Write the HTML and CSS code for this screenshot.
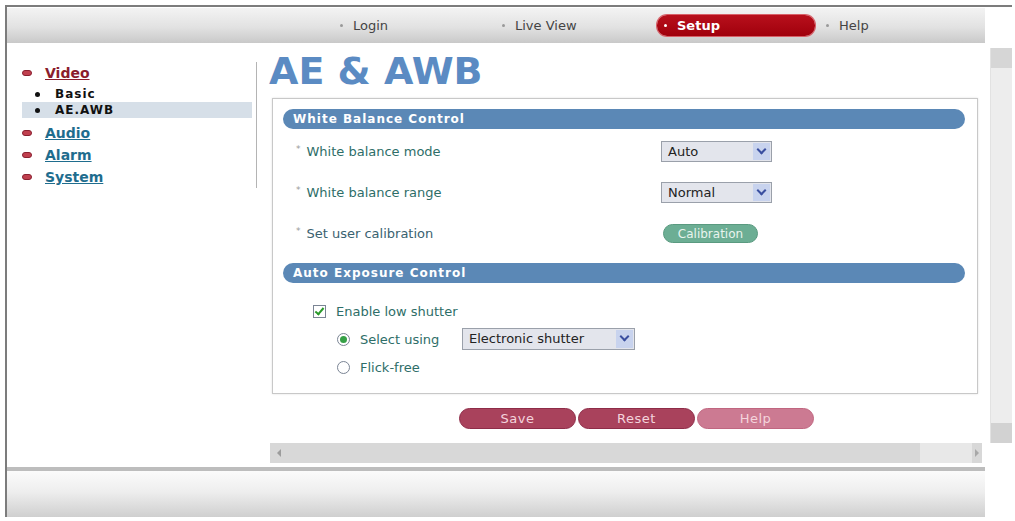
FILE: index.html
```html
<!DOCTYPE html>
<html lang="en">
<head>
    <meta charset="UTF-8">
    <title>AE &amp; AWB Setup</title>
    <link rel="stylesheet" href="styles.css">
</head>
<body>

    <div class="frame">
        <div class="topbar">
            <nav class="nav">
                <a class="nav-item">Login</a>
                <a class="nav-item">Live View</a>
                <a class="nav-item selected">Setup</a>
                <a class="nav-item">Help</a>
            </nav>
        </div>

        <div class="middle">
            <aside class="sidebar">
                <ul class="menu">
                    <li class="menu-item open"><a>Video</a>
                        <ul class="submenu">
                            <li>Basic</li>
                            <li class="current">AE.AWB</li>
                        </ul>
                    </li>
                    <li class="menu-item"><a>Audio</a></li>
                    <li class="menu-item"><a>Alarm</a></li>
                    <li class="menu-item"><a>System</a></li>
                </ul>
            </aside>

            <div class="content">
                <div class="page">
                    <h1 class="title">AE &amp; AWB</h1>

                    <div class="panel">
                        <div class="section-title">White Balance Control</div>
                        <div class="rows">
                            <div class="row">
                                <span class="label">White balance mode</span>
                                <div class="select short">Auto<span class="arrow"></span></div>
                            </div>
                            <div class="row">
                                <span class="label">White balance range</span>
                                <div class="select short">Normal<span class="arrow"></span></div>
                            </div>
                            <div class="row">
                                <span class="label cal">Set user calibration</span>
                                <button class="calibration">Calibration</button>
                            </div>
                        </div>

                        <div class="section-title">Auto Exposure Control</div>
                        <div class="exposure">
                            <div class="opt">
                                <span class="checkbox checked"></span>
                                <span>Enable low shutter</span>
                            </div>
                            <div class="opt sub">
                                <span class="radio checked"></span>
                                <span class="opt-label">Select using</span>
                                <div class="select long">Electronic shutter<span class="arrow"></span></div>
                            </div>
                            <div class="opt sub">
                                <span class="radio"></span>
                                <span>Flick-free</span>
                            </div>
                        </div>
                    </div>

                    <div class="buttons">
                        <button class="btn">Save</button>
                        <button class="btn">Reset</button>
                        <button class="btn light">Help</button>
                    </div>
                </div>

                <div class="vscroll">
                    <div class="vthumb"></div>
                    <div class="vtrack"></div>
                    <div class="vend"></div>
                </div>

                <div class="hscroll">
                    <span class="harrow left"></span>
                    <span class="htrack"></span>
                    <span class="hthumb"></span>
                    <span class="harrow right"></span>
                </div>
            </div>
        </div>

        <div class="separator"></div>
        <div class="footer"></div>
    </div>

</body>
</html>
```

FILE: styles.css
```css
body {
    margin: 0;
    background: #fff;
    font-family: "DejaVu Sans", Verdana, sans-serif;
    color: #333;
}
.frame {
    margin: 5px 0 0 5px;
    width: 1005px;
    border-top: 2px solid #7c7c7c;
    border-left: 2px solid #7c7c7c;
}

/* top navigation */
.topbar {
    margin-top: 1px;
    width: 978px;
    height: 35px;
    background: linear-gradient(#f3f3f3, #e2e2e2 55%, #c9c9c9);
}
.nav {
    display: flex;
    gap: 4px;
    padding: 7px 0 0 326px;
}
.nav-item {
    display: flex;
    align-items: center;
    width: 158px;
    height: 21px;
    box-sizing: border-box;
    padding-left: 7px;
    font-size: 13px;
    color: #444;
}
.nav-item::before {
    content: "";
    width: 3px;
    height: 3px;
    border-radius: 50%;
    background: #999;
    margin-right: 10px;
}
.nav-item.selected {
    background: linear-gradient(#b8101c, #a0000c);
    border-radius: 10px;
    color: #fff;
    font-weight: bold;
    box-shadow: 0 0 0 1px #d86068;
}
.nav-item.selected::before {
    background: #fff;
}

/* sidebar + content */
.middle {
    display: flex;
    height: 420px;
}
.sidebar {
    width: 261px;
}
.menu {
    list-style: none;
    width: 230px;
    margin: 19px 0 0;
    padding: 0 4px 0 15px;
    border-right: 1px solid #b4b4b4;
}
.menu-item > a {
    display: flex;
    align-items: center;
    height: 22px;
    font-size: 14px;
    font-weight: bold;
    color: #1f6d8e;
    text-decoration: underline;
}
.menu-item > a::before {
    content: "";
    width: 10px;
    height: 6px;
    border-radius: 3px;
    background: #c0404e;
    border: 1px solid #8a2030;
    box-sizing: border-box;
    margin-right: 13px;
}
.menu-item.open > a {
    color: #8a1c2c;
}
.submenu {
    list-style: none;
    margin: 2px 0 4px;
    padding: 0;
}
.submenu li {
    display: flex;
    align-items: center;
    height: 16px;
    padding-left: 13px;
    font-size: 12px;
    font-weight: bold;
    letter-spacing: 1px;
    color: #111;
}
.submenu li::before {
    content: "";
    width: 5px;
    height: 5px;
    border-radius: 50%;
    background: #111;
    margin-right: 15px;
}
.submenu li.current {
    background: #d6dfe8;
}

.content {
    display: grid;
    grid-template-columns: 714px 22px;
    grid-template-rows: 400px 20px;
    column-gap: 8px;
}
.page {
    padding: 8px 0 0 1px;
}
.title {
    margin: 0;
    font-size: 38px;
    line-height: 40px;
    color: #5b8bc3;
}
.panel {
    margin: 7px 0 0 3px;
    width: 706px;
    box-sizing: border-box;
    border: 1px solid #c8c8c8;
    box-shadow: 0 0 2px rgba(0, 0, 0, 0.12);
    padding: 10px 12px 12px 10px;
}
.section-title {
    height: 20px;
    line-height: 20px;
    border-radius: 10px;
    background: #5b88b6;
    color: #fff;
    font-size: 12px;
    font-weight: bold;
    letter-spacing: 1px;
    padding-left: 10px;
}
.rows {
    padding: 2px 0 9px 13px;
}
.row {
    display: flex;
    align-items: center;
    height: 41px;
}
.label {
    width: 365px;
    font-size: 13px;
    color: #2e6e68;
}
.label::before {
    content: "*";
    font-size: 9px;
    color: #999;
    margin-right: 6px;
    vertical-align: 4px;
}
.label.cal {
    color: #3a6270;
}
.select {
    position: relative;
    height: 21px;
    box-sizing: border-box;
    border: 1px solid #9aa0aa;
    background: #e3e5ec;
    font-size: 13px;
    line-height: 19px;
    padding-left: 6px;
    color: #222;
}
.select.short {
    width: 111px;
}
.select.long {
    width: 173px;
    height: 22px;
    line-height: 20px;
}
.arrow {
    position: absolute;
    right: 1px;
    top: 1px;
    bottom: 1px;
    width: 17px;
    background: #c8d3ee;
}
.arrow::after {
    content: "";
    position: absolute;
    left: 5px;
    top: 3px;
    width: 5px;
    height: 5px;
    border-right: 2px solid #3a4fa0;
    border-bottom: 2px solid #3a4fa0;
    transform: rotate(45deg);
}
.calibration {
    margin-left: 2px;
    width: 95px;
    height: 19px;
    padding: 0;
    border: 1px solid #5a9a80;
    border-radius: 10px;
    background: #6cae94;
    color: #e8f4ee;
    font-family: "DejaVu Sans", Verdana, sans-serif;
    font-size: 12px;
}

.exposure {
    padding: 14px 0 0 30px;
}
.opt {
    display: flex;
    align-items: center;
    height: 28px;
    font-size: 13px;
    color: #2e6e68;
}
.opt.sub {
    padding-left: 24px;
}
.opt-label {
    width: 102px;
}
.checkbox, .radio {
    width: 13px;
    height: 13px;
    box-sizing: border-box;
    border: 1px solid #7a8494;
    background: #fff;
    margin-right: 10px;
    position: relative;
}
.radio {
    border-radius: 50%;
}
.checkbox.checked::after {
    content: "";
    position: absolute;
    left: 3px;
    top: 0;
    width: 3px;
    height: 7px;
    border-right: 2px solid #2a9a2a;
    border-bottom: 2px solid #2a9a2a;
    transform: rotate(40deg);
}
.radio.checked::after {
    content: "";
    position: absolute;
    left: 2px;
    top: 2px;
    width: 7px;
    height: 7px;
    border-radius: 50%;
    background: #36a046;
}

.buttons {
    display: flex;
    gap: 2px;
    margin: 14px 0 0 190px;
}
.btn {
    width: 117px;
    height: 21px;
    padding: 0;
    border: 1px solid #8e2c48;
    border-radius: 11px;
    background: #a9425c;
    color: #f4d4dc;
    font-family: "DejaVu Sans", Verdana, sans-serif;
    font-size: 13px;
    letter-spacing: 0.5px;
}
.btn.light {
    background: #cc7a92;
    border-color: #c06680;
}

/* scrollbars */
.vscroll {
    display: flex;
    flex-direction: column;
    margin-top: 5px;
    background: #ededed;
    border-left: 1px solid #e2e2e2;
}
.vthumb {
    height: 20px;
    background: #d6d6d6;
}
.vtrack {
    flex: 1;
}
.vend {
    height: 20px;
    background: #d2d2d2;
}
.hscroll {
    display: flex;
    align-items: center;
    margin-left: 2px;
    background: #d8d8d8;
}
.harrow {
    width: 0;
    height: 0;
    border-top: 4px solid transparent;
    border-bottom: 4px solid transparent;
}
.harrow.left {
    margin: 0 0 0 7px;
    border-right: 4px solid #9c9c9c;
}
.harrow.right {
    margin: 0 3px 0 3px;
    border-left: 4px solid #a8a8a8;
}
.htrack {
    flex: 1;
}
.hthumb {
    width: 52px;
    height: 100%;
    background: #e8e8e8;
}

/* footer */
.separator {
    margin-top: 4px;
    width: 978px;
    height: 4px;
    background: #bdbdbd;
}
.footer {
    width: 978px;
    height: 46px;
    background: linear-gradient(#fbfbfb, #eeeeee 45%, #cfcfcf);
}
```
